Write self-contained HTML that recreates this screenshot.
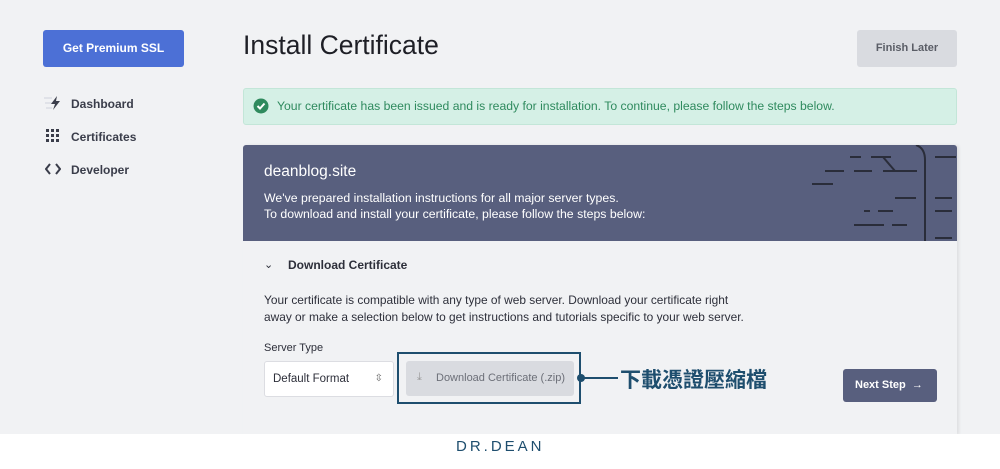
<!DOCTYPE html>
<html><head><meta charset="utf-8"><style>
*{margin:0;padding:0;box-sizing:border-box}
body{width:1000px;height:469px;background:#f1f2f4;font-family:"Liberation Sans",sans-serif;position:relative;overflow:hidden;color:#2d2f3a}
.a{position:absolute}
.btn1{left:43px;top:30px;width:141px;height:37px;background:#4c70d6;border-radius:3px;color:#fff;font-weight:bold;font-size:12px;text-align:center;line-height:37px}
.nav{left:71px;font-size:12px;font-weight:bold;color:#3a3d4a}
h1{position:absolute;left:243px;top:30px;font-size:26.5px;font-weight:normal;color:#1e1f26}
.fin{left:857px;top:30px;width:100px;height:37px;background:#d9dbe0;border-radius:3px;color:#5a5d66;font-weight:bold;font-size:11px;text-align:center;line-height:36px}
.alert{left:243px;top:88px;width:714px;height:37px;background:#d5f0e6;border:1px solid #c3e6d8;border-radius:3px;color:#2f8a5e;font-size:12.2px;line-height:35px;padding-left:33px}
.card{left:243px;top:145px;width:714px;height:290px;background:#f1f2f4;box-shadow:2px 0 3px rgba(0,0,0,.08);border-radius:3px 3px 0 0}
.hd{left:0;top:0;width:714px;height:96px;background:#585f7e;border-radius:3px 3px 0 0;color:#fff}
.white{left:0;top:434px;width:1000px;height:35px;background:#fff}
</style></head><body>
<div class="a btn1">Get Premium SSL</div>
<svg class="a" style="left:44px;top:95px" width="20" height="16"><g fill="#e0e2e8"><rect x="0" y="2" width="8" height="2"/><rect x="1" y="7" width="7" height="2"/><rect x="2" y="12" width="6" height="2"/></g><path d="M13 1 L7 9 H11 L9 15 L16 6 H12 Z" fill="#3a3d4a"/></svg>
<div class="a nav" style="top:97px">Dashboard</div>
<svg class="a" style="left:46px;top:129px" width="14" height="14" fill="#3a3d4a"><rect x="0" y="0" width="3" height="3"/><rect x="5" y="0" width="3" height="3"/><rect x="10" y="0" width="3" height="3"/><rect x="0" y="5" width="3" height="3"/><rect x="5" y="5" width="3" height="3"/><rect x="10" y="5" width="3" height="3"/><rect x="0" y="10" width="3" height="3"/><rect x="5" y="10" width="3" height="3"/><rect x="10" y="10" width="3" height="3"/></svg>
<div class="a nav" style="top:130px">Certificates</div>
<svg class="a" style="left:45px;top:163px" width="16" height="12" fill="none" stroke="#3a3d4a" stroke-width="2"><path d="M5 1 L1 6 L5 11 M11 1 L15 6 L11 11"/></svg>
<div class="a nav" style="top:163px">Developer</div>
<h1>Install Certificate</h1>
<div class="a fin">Finish Later</div>
<div class="a alert">Your certificate has been issued and is ready for installation. To continue, please follow the steps below.</div>
<svg class="a" style="left:253px;top:98px" width="16" height="16"><circle cx="8" cy="8" r="7.5" fill="#2f8a5e"/><path d="M4.5 8 L7 10.5 L11.5 5.5" stroke="#fff" stroke-width="2" fill="none"/></svg>
<div class="a card">
 <div class="a hd">
  <div class="a" style="left:21px;top:18px;font-size:15.5px">deanblog.site</div>
  <div class="a" style="left:21px;top:45px;font-size:12.3px;line-height:16px">We've prepared installation instructions for all major server types.<br>To download and install your certificate, please follow the steps below:</div>
 </div>
 <div class="a" style="left:21px;top:113px;font-size:11px">⌄</div>
 <div class="a" style="left:45px;top:113px;font-size:12px;font-weight:bold;color:#2d2f3a">Download Certificate</div>
 <div class="a" style="left:21px;top:147px;font-size:11.9px;line-height:17px;color:#2d2f3a">Your certificate is compatible with any type of web server. Download your certificate right<br>away or make a selection below to get instructions and tutorials specific to your web server.</div>
 <div class="a" style="left:21px;top:197px;font-size:11px">Server Type</div>
 <div class="a" style="left:21px;top:216px;width:130px;height:36px;background:#fff;border:1px solid #dcdde2;border-radius:3px;font-size:11.5px;line-height:34px;padding-left:8px">Default Format<span style="position:absolute;right:10px;top:0;font-size:10px;color:#666">⇳</span></div>
 <div class="a" style="left:163px;top:216px;width:168px;height:35px;background:#d9dbe0;border-radius:3px;font-size:11px;line-height:35px;color:#6c6f78;padding-left:30px">Download Certificate (.zip)</div>
 <div class="a" style="left:174px;top:226px;font-size:11px;color:#999">⤓</div>
 <div class="a" style="left:600px;top:224px;width:94px;height:33px;background:#585f7e;border-radius:3px;color:#fff;font-weight:bold;font-size:11px;line-height:33px;padding-left:12px">Next Step &nbsp;→</div>
</div>
<svg class="a" style="left:800px;top:145px" width="160" height="96" stroke="#2a2d3a" stroke-width="2" fill="none">
<path d="M50 12H61M71 12H91M83 12L95 26M25 26H44M54 26H72M83 26H117M12 39H33M95 53H116M64 66H70M78 66H93M54 80H84M92 80H107M116 0Q125 3 125 15V96M135 12H156M135 53H152M135 66H152M135 93H152"/>
</svg>
<div class="a" style="left:397px;top:352px;width:184px;height:52px;border:2px solid #1e4e6e"></div>
<div class="a" style="left:583px;top:377px;width:35px;height:2px;background:#1e4e6e"></div>
<div class="a" style="left:577px;top:374px;width:8px;height:8px;border-radius:50%;background:#1e4e6e"></div>
<div class="a" style="left:620px;top:364px;font-size:21px;font-weight:bold;color:#1e4e6e;font-family:'Noto Sans CJK TC',sans-serif">下載憑證壓縮檔</div>
<div class="white a"></div>
<div class="a" style="left:456px;top:438px;font-size:15px;color:#1e4e6e;letter-spacing:3px">DR.DEAN</div>
</body></html>
